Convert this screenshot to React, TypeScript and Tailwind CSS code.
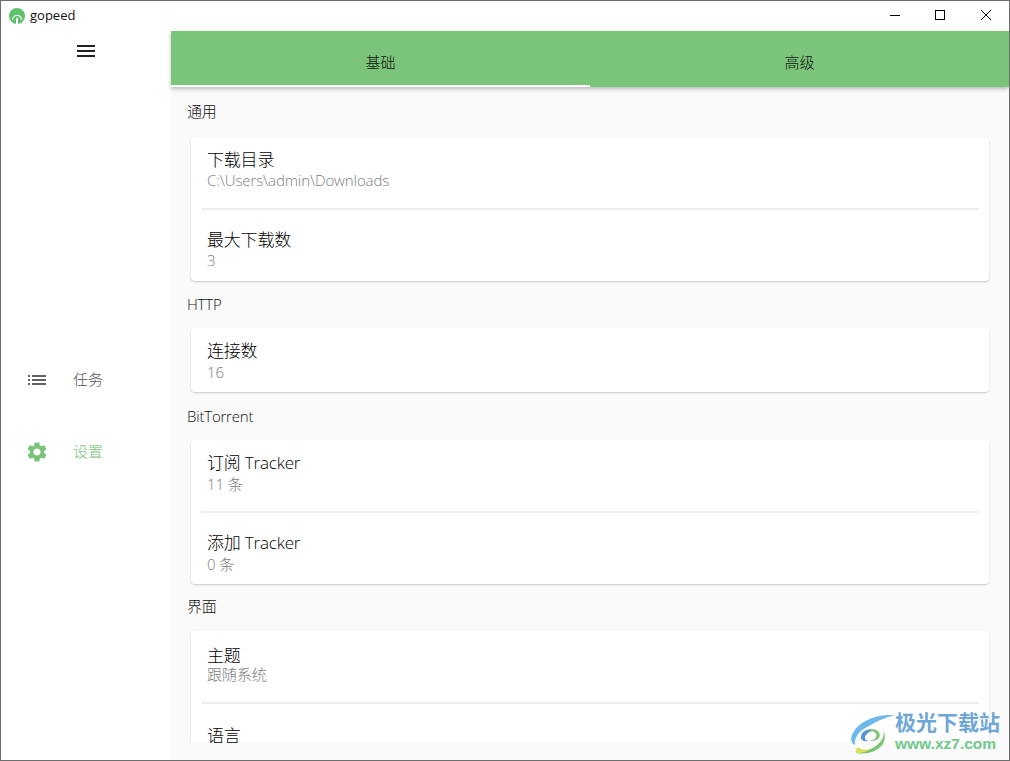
import React from 'react';

const font = { fontFamily: '"Open Sans", "Noto Sans CJK SC", sans-serif' };

interface Item {
  title: string;
  sub?: string;
}

const sections: { label: string; labelPad: string; tile: string; subLine: string; items: Item[] }[] = [
  {
    label: '通用',
    labelPad: 'pb-[4px]',
    tile: 'pt-[12px]',
    subLine: 'leading-[18px]',
    items: [
      { title: '下载目录', sub: 'C:\\Users\\admin\\Downloads' },
      { title: '最大下载数', sub: '3' },
    ],
  },
  { label: 'HTTP', labelPad: 'pb-0', tile: 'pt-[12px]', subLine: 'leading-[20px]', items: [{ title: '连接数', sub: '16' }] },
  {
    label: 'BitTorrent',
    labelPad: 'pb-0',
    tile: 'pt-[12px]',
    subLine: 'leading-[20px]',
    items: [
      { title: '订阅 Tracker', sub: '11 条' },
      { title: '添加 Tracker', sub: '0 条' },
    ],
  },
  {
    label: '界面',
    labelPad: 'pb-[2px]',
    tile: 'pt-[14px]',
    subLine: 'leading-[14px]',
    items: [{ title: '主题', sub: '跟随系统' }, { title: '语言' }],
  },
];

function Logo() {
  return (
    <svg width="16" height="16" viewBox="0 0 16 16">
      <circle cx="8" cy="8" r="8" fill="#5fc16c" />
      <path d="M3.5 12 C3.5 9 5.5 7.5 8 7.5 C10.5 7.5 12.5 9 12.5 12" fill="none" stroke="#fff" strokeWidth="1.2" />
      <rect x="7" y="10" width="2" height="6" fill="#fff" />
    </svg>
  );
}

function WindowButtons() {
  return (
    <div className="flex h-full items-center">
      <svg width="46" height="30" viewBox="0 0 46 30">
        <path d="M19 14.5h10" stroke="#000" strokeWidth="1" />
      </svg>
      <svg width="46" height="30" viewBox="0 0 46 30">
        <rect x="18.5" y="9.5" width="9" height="9" fill="none" stroke="#000" strokeWidth="1" />
      </svg>
      <svg width="46" height="30" viewBox="0 0 46 30">
        <path d="M18 9l10 10M28 9l-10 10" stroke="#000" strokeWidth="1" />
      </svg>
    </div>
  );
}

function Sidebar() {
  return (
    <aside className="flex w-[170px] shrink-0 flex-col bg-white">
      <div className="flex justify-center pt-[8px]">
        <svg width="24" height="24" viewBox="0 0 24 24" fill="#222">
          <path d="M3 18h18v-2H3v2zm0-5h18v-2H3v2zm0-7v2h18V6H3z" />
        </svg>
      </div>
      <div className="mt-[305px] flex h-[24px] items-center pl-[24px]">
        <svg width="24" height="24" viewBox="0 0 24 24" fill="#616161">
          <path d="M3 13h2v-2H3v2zm0 4h2v-2H3v2zm0-8h2V7H3v2zm4 4h14v-2H7v2zm0 4h14v-2H7v2zM7 7v2h14V7H7z" />
        </svg>
        <span className="ml-[24px] pb-[2px] text-[15px] font-light leading-[22px] text-[#555]">任务</span>
      </div>
      <div className="mt-[48px] flex h-[24px] items-center pl-[24px]">
        <svg width="24" height="24" viewBox="0 0 24 24" fill="#79c47a">
          <path d="M19.14 12.94c.04-.3.06-.61.06-.94 0-.32-.02-.64-.07-.94l2.03-1.58a.49.49 0 0 0 .12-.61l-1.92-3.32a.488.488 0 0 0-.59-.22l-2.39.96c-.5-.38-1.03-.7-1.62-.94l-.36-2.54a.484.484 0 0 0-.48-.41h-3.84c-.24 0-.43.17-.47.41l-.36 2.54c-.59.24-1.13.57-1.62.94l-2.39-.96c-.22-.08-.47 0-.59.22L2.74 8.87c-.12.21-.08.47.12.61l2.03 1.58c-.05.3-.09.63-.09.94s.02.64.07.94l-2.03 1.58a.49.49 0 0 0-.12.61l1.92 3.32c.12.22.37.29.59.22l2.39-.96c.5.38 1.03.7 1.62.94l.36 2.54c.05.24.24.41.48.41h3.84c.24 0 .44-.17.47-.41l.36-2.54c.59-.24 1.13-.56 1.62-.94l2.39.96c.22.08.47 0 .59-.22l1.92-3.32c.12-.22.07-.47-.12-.61l-2.01-1.58zM12 15.6c-1.98 0-3.6-1.62-3.6-3.6s1.62-3.6 3.6-3.6 3.6 1.62 3.6 3.6-1.62 3.6-3.6 3.6z" />
        </svg>
        <span className="ml-[24px] pb-[2px] text-[15px] font-light leading-[22px] text-[#79c47a]">设置</span>
      </div>
    </aside>
  );
}

function Section({ label, labelPad, tile, subLine, items }: { label: string; labelPad: string; tile: string; subLine: string; items: Item[] }) {
  return (
    <section>
      <div className={`flex h-[47.5px] items-center pl-[16px] text-[15px] font-light tracking-[-0.2px] text-[#111] ${labelPad}`}>{label}</div>
      <div className="mx-[20px] rounded-[4px] bg-white shadow-[0_1px_2px_rgba(0,0,0,0.2)]">
        {items.map((item, i) => (
          <div key={item.title}>
            {i > 0 && (
              <div className="flex h-[16px] items-center px-[10px]">
                <div className="h-[2px] w-full bg-[#eeeeee]" />
              </div>
            )}
            <div className={`h-[64px] px-[16px] ${tile}`}>
              <div className="text-[17px] font-light leading-[22px] tracking-[-0.2px] text-[#000]">{item.title}</div>
              {item.sub && <div className={`text-[15px] font-light tracking-[-0.1px] text-[#7d7d7d] ${subLine}`}>{item.sub}</div>}
            </div>
          </div>
        ))}
      </div>
    </section>
  );
}

function Watermark() {
  return (
    <div className="absolute bottom-[3px] left-[849px] flex items-center">
      <svg width="46" height="46" viewBox="0 0 46 46">
        <path d="M44 4C26 3 8 10 2 24c-2 5 0 9 3 10-1-5 2-13 12-18C25 11 34 7 44 4z" fill="#6cb8ea" />
        <path d="M25 19c-6-2-13 1-14 6-1 4 3 6 7 5-3-1-4-3-2-6 2-3 6-4 9-5z" fill="#5b93cf" />
        <path d="M17 21c6-2 11 1 9 5-1 3-5 4-8 3 3 2 8 1 11-2 2-3 0-7-3-8-3-1-6 0-9 2z" fill="#7fc678" />
        <path d="M32 17c4 5 1 13-6 18-6 4-13 6-20 7 12 2 22-2 27-9 3-6 2-12-1-16z" fill="#76c76f" />
        <path d="M8 36c3 3 9 4 14 1-4 3-11 6-16 5-1-2 0-4 2-6z" fill="#d9df58" />
      </svg>
      <div className="-ml-[1px] -mt-[4px] flex flex-col">
        <span className="text-[21px] font-bold leading-[24px] text-[#6fa6d8]">极光下载站</span>
        <span className="text-[15.5px] font-bold leading-[20px] text-[#6fc98a]" style={{ fontFamily: '"Liberation Sans", sans-serif' }}>
          www.xz7.com
        </span>
      </div>
    </div>
  );
}

export default function App() {
  return (
    <div className="relative flex h-[761px] w-[1010px] flex-col overflow-hidden border border-[#6e6e6e] bg-white" style={font}>
      <header className="flex h-[30px] shrink-0 items-center justify-between bg-white">
        <div className="flex items-center pl-[8px]">
          <Logo />
          <span className="ml-[5px] text-[13px] text-[#111]">gopeed</span>
        </div>
        <WindowButtons />
      </header>
      <div className="flex min-h-0 flex-1">
        <Sidebar />
        <main className="relative flex min-w-0 flex-1 flex-col bg-[#fafafa]">
          <nav className="relative z-10 grid h-[56px] shrink-0 grid-cols-2 bg-[#7bc57a] shadow-[0_2px_4px_rgba(0,0,0,0.25)]">
            <div className="flex items-center justify-center border-b-2 border-white pt-[9px] text-[15px] font-light text-[#111]">基础</div>
            <div className="flex items-center justify-center border-b-2 border-transparent pt-[9px] text-[15px] font-light text-[#111]">高级</div>
          </nav>
          <div className="h-[656px] overflow-hidden pt-[2px]">
            {sections.map((s) => (
              <Section key={s.label} label={s.label} labelPad={s.labelPad} tile={s.tile} subLine={s.subLine} items={s.items} />
            ))}
          </div>
        </main>
      </div>
      <Watermark />
    </div>
  );
}
